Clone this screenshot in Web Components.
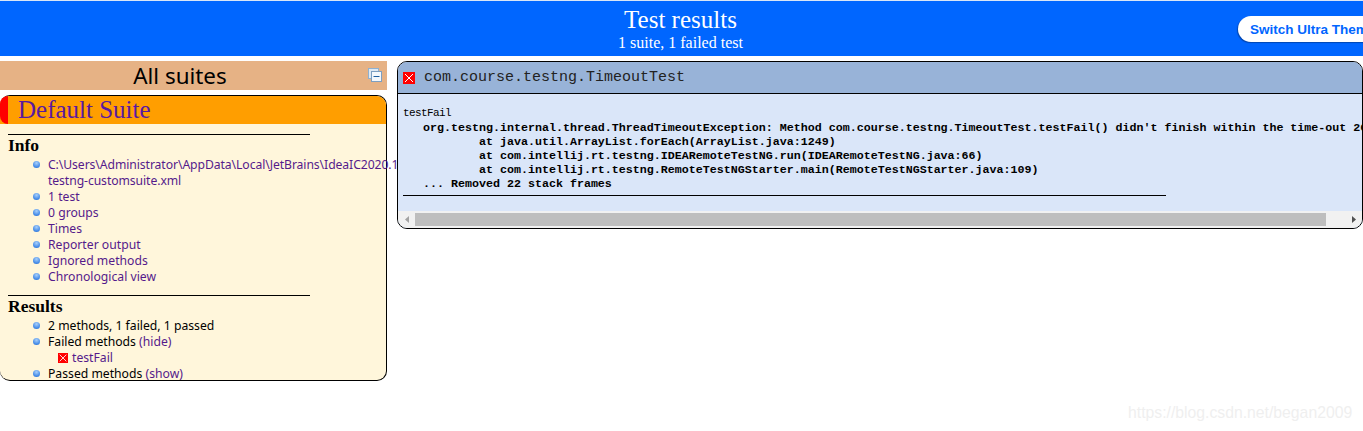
<!DOCTYPE html>
<html>
<head>
<meta charset="utf-8">
<title>Test results</title>
<style>
    html, body { margin: 0; padding: 0; background: #fff; overflow: hidden; height: 431px; }
    body { font-family: "Liberation Serif", serif; }
    .columns { display: grid; grid-template-columns: 387px 966px; column-gap: 10px; padding-top: 5px; }
</style>
</head>
<body>
<tr-header title="Test results" subtitle="1 suite, 1 failed test" button="Switch Ultra Theme"></tr-header>
<div class="columns">
    <tr-sidebar>
        <tr-section heading="Info">
            <tr-item><a style="letter-spacing:-0.08px">C:\Users\Administrator\AppData\Local\JetBrains\IdeaIC2020.1\temp-testng-customsuite.xml</a></tr-item>
            <tr-item><a>1 test</a></tr-item>
            <tr-item><a>0 groups</a></tr-item>
            <tr-item><a>Times</a></tr-item>
            <tr-item><a>Reporter output</a></tr-item>
            <tr-item><a>Ignored methods</a></tr-item>
            <tr-item><a>Chronological view</a></tr-item>
        </tr-section>
        <tr-section heading="Results">
            <tr-item>2 methods, 1 failed, 1 passed</tr-item>
            <tr-item>Failed methods <a>(hide)</a></tr-item>
            <tr-method>testFail</tr-method>
            <tr-item>Passed methods <a>(show)</a></tr-item>
        </tr-section>
    </tr-sidebar>
    <tr-class-panel name="com.course.testng.TimeoutTest"></tr-class-panel>
</div>
<tr-watermark>https://blog.csdn.net/began2009</tr-watermark>

<script>
const FAIL_ICON = (size) => `
    <svg width="${size}" height="${size}" viewBox="0 0 12 12" style="display:block;flex:none">
        <rect width="12" height="12" fill="#f00"/>
        <path d="M2 2L10 10M10 2L2 10" stroke="#fff" stroke-width="1" fill="none"/>
    </svg>`;

class TrHeader extends HTMLElement {
    connectedCallback() {
        const root = this.shadowRoot || this.attachShadow({ mode: 'open' });
        root.innerHTML = `
            <style>
                :host {
                    display: block;
                    box-sizing: border-box;
                    height: 56px;
                    border-top: 1px solid #d9e6f7;
                    background: #06f;
                    color: #fff;
                    font-family: "Liberation Serif", serif;
                    position: relative;
                    overflow: hidden;
                    text-align: center;
                }
                .title { font-size: 25px; line-height: 28px; padding-top: 5px; margin-left: -2px; }
                .sub { font-size: 16px; line-height: 16px; margin: 1px 0 0 -2px; }
                button {
                    position: absolute;
                    left: 1238px;
                    top: 15px;
                    width: 150px;
                    height: 26px;
                    border: 0;
                    padding: 1px 0 0 12px;
                    text-align: left;
                    white-space: nowrap;
                    border-radius: 13px;
                    background: #fff;
                    color: #06f;
                    font: bold 13.5px/25px "Liberation Sans", sans-serif;
                    box-shadow: -1px 1px 1px #0047b3;
                }
            </style>
            <div class="title">${this.getAttribute('title')}</div>
            <div class="sub">${this.getAttribute('subtitle')}</div>
            <button>${this.getAttribute('button')}</button>
        `;
    }
}
customElements.define('tr-header', TrHeader);

class TrSidebar extends HTMLElement {
    constructor() {
        super();
        this.attachShadow({ mode: 'open' });
    }
    connectedCallback() {
        this.shadowRoot.innerHTML = `
            <style>
                :host { display: block; width: 387px; }
                .top {
                    height: 29px;
                    background: #e6b285;
                    display: flex;
                    align-items: center;
                    justify-content: center;
                    position: relative;
                    font: 22.4px/29px "Noto Sans", sans-serif;
                    color: #000;
                    padding-left: 1px;
                }
                .top span { position: relative; left: -14px; }
                .top svg { position: absolute; left: 368px; top: 7px; }
                .suite {
                    margin-top: 5px;
                    height: 286px;
                    box-sizing: border-box;
                    border: 1px solid #000;
                    border-left: 0;
                    border-radius: 10px;
                    background: #fff6db;
                }
                .name {
                    height: 28px;
                    background: #ff9e00;
                    border-radius: 9px 9px 0 0;
                    font: 25px/28px "Liberation Serif", serif;
                    color: #5a1aa0;
                    padding-left: 18px;
                    position: relative;
                }
                .name::before {
                    content: "";
                    position: absolute;
                    left: 0;
                    top: 0;
                    bottom: 0;
                    width: 8px;
                    background: #f00;
                    border-radius: 8px 0 0 8px;
                }
                .body { padding: 10px 0 0 8px; }
            </style>
            <div class="top">
                <span>All suites</span>
                <svg width="14" height="14" viewBox="0 0 14 14">
                    <rect x="0.5" y="0.5" width="10" height="10" fill="#dfe9f3" stroke="#8fb0cf"/>
                    <rect x="3.5" y="3.5" width="10" height="10" fill="#f4f8fc" stroke="#7d9fc1"/>
                    <path d="M5.5 8.5H11.5" stroke="#1f5f9f"/>
                </svg>
            </div>
            <div class="suite">
                <div class="name">Default Suite</div>
                <div class="body"><slot></slot></div>
            </div>
        `;
    }
}
customElements.define('tr-sidebar', TrSidebar);

class TrSection extends HTMLElement {
    constructor() {
        super();
        this.attachShadow({ mode: 'open' });
    }
    connectedCallback() {
        this.shadowRoot.innerHTML = `
            <style>
                :host { display: block; margin-bottom: 10px; }
                hr { width: 302px; height: 1px; border: 0; background: #000; margin: 0; }
                h3 {
                    margin: 0 0 2px;
                    font: bold 17.5px/20px "Liberation Serif", serif;
                    color: #000;
                }
                ul { list-style: none; margin: 0; padding: 0; }
            </style>
            <hr>
            <h3>${this.getAttribute('heading')}</h3>
            <ul><slot></slot></ul>
        `;
    }
}
customElements.define('tr-section', TrSection);

class TrItem extends HTMLElement {
    constructor() {
        super();
        this.attachShadow({ mode: 'open' });
    }
    connectedCallback() {
        this.shadowRoot.innerHTML = `
            <style>
                :host {
                    display: block;
                    position: relative;
                    padding-left: 40px;
                    font: 12.2px/16px "Noto Sans", sans-serif;
                    color: #000;
                }
                i {
                    position: absolute;
                    left: 25px;
                    top: 4px;
                    width: 7px;
                    height: 7px;
                    border-radius: 50%;
                    background: radial-gradient(circle at 50% 30%, #a9d0fb, #3d86e6 70%, #2a69c4);
                }
                ::slotted(a) { color: #551a8b; }
            </style>
            <i></i><slot></slot>
        `;
    }
}
customElements.define('tr-item', TrItem);

class TrMethod extends HTMLElement {
    constructor() {
        super();
        this.attachShadow({ mode: 'open' });
    }
    connectedCallback() {
        this.shadowRoot.innerHTML = `
            <style>
                :host {
                    display: flex;
                    align-items: center;
                    gap: 4px;
                    padding-left: 50px;
                    font: 12.2px/16px "Noto Sans", sans-serif;
                    color: #551a8b;
                }
            </style>
            ${FAIL_ICON(10)}<slot></slot>
        `;
    }
}
customElements.define('tr-method', TrMethod);

class TrScrollbar extends HTMLElement {
    constructor() {
        super();
        this.attachShadow({ mode: 'open' });
    }
    connectedCallback() {
        this.shadowRoot.innerHTML = `
            <style>
                :host {
                    display: flex;
                    align-items: center;
                    height: 17px;
                    background: #f1f1f1;
                }
                .arrow { flex: none; width: 17px; display: flex; justify-content: center; }
                .thumb { flex: none; width: 911px; height: 13px; background: #bebebe; }
                .rest { flex: 1; }
            </style>
            <div class="arrow"><svg width="4" height="7"><path d="M4 0V7L0 3.5Z" fill="#a3a3a3"/></svg></div>
            <div class="thumb"></div>
            <div class="rest"></div>
            <div class="arrow"><svg width="4" height="7"><path d="M0 0V7L4 3.5Z" fill="#505050"/></svg></div>
        `;
    }
}
customElements.define('tr-scrollbar', TrScrollbar);

class TrClassPanel extends HTMLElement {
    constructor() {
        super();
        this.attachShadow({ mode: 'open' });
    }
    connectedCallback() {
        this.shadowRoot.innerHTML = `
            <style>
                :host {
                    display: block;
                    position: relative;
                    box-sizing: border-box;
                    width: 966px;
                    height: 168px;
                    border: 1px solid #000;
                    border-radius: 10px;
                    overflow: hidden;
                    background: #dae6f9;
                    font-family: "Liberation Mono", monospace;
                    color: #000;
                }
                .head {
                    box-sizing: border-box;
                    height: 32px;
                    background: #98b3d8;
                    border-bottom: 1px solid #000;
                    display: flex;
                    align-items: center;
                    gap: 9px;
                    padding-left: 5px;
                    font-size: 15px;
                    color: #222;
                }
                .body { box-sizing: border-box; height: 117px; padding: 12px 0 0 5px; overflow: hidden; }
                .method { font-size: 11px; letter-spacing: -0.6px; line-height: 14px; height: 15px; }
                pre {
                    margin: 0;
                    font: bold 11.67px/14px "Liberation Mono", monospace;
                    white-space: pre;
                    padding-left: 20px;
                }
                hr { width: 763px; height: 1px; border: 0; background: #000; margin: 4px 0 0; }
            </style>
            <div class="head">${FAIL_ICON(12)}<span>${this.getAttribute('name')}</span></div>
            <div class="body">
                <div class="method">testFail</div>
<pre>org.testng.internal.thread.ThreadTimeoutException: Method com.course.testng.TimeoutTest.testFail() didn't finish within the time-out 2000
        at java.util.ArrayList.forEach(ArrayList.java:1249)
        at com.intellij.rt.testng.IDEARemoteTestNG.run(IDEARemoteTestNG.java:66)
        at com.intellij.rt.testng.RemoteTestNGStarter.main(RemoteTestNGStarter.java:109)
... Removed 22 stack frames</pre>
                <hr>
            </div>
            <tr-scrollbar></tr-scrollbar>
        `;
    }
}
customElements.define('tr-class-panel', TrClassPanel);

class TrWatermark extends HTMLElement {
    constructor() {
        super();
        this.attachShadow({ mode: 'open' });
    }
    connectedCallback() {
        this.shadowRoot.innerHTML = `
            <style>
                :host {
                    position: absolute;
                    left: 1128px;
                    top: 404px;
                    font: 15.75px/18px "Liberation Sans", sans-serif;
                    color: #efefef;
                    white-space: nowrap;
                }
            </style>
            <slot></slot>
        `;
    }
}
customElements.define('tr-watermark', TrWatermark);
</script>
</body>
</html>
